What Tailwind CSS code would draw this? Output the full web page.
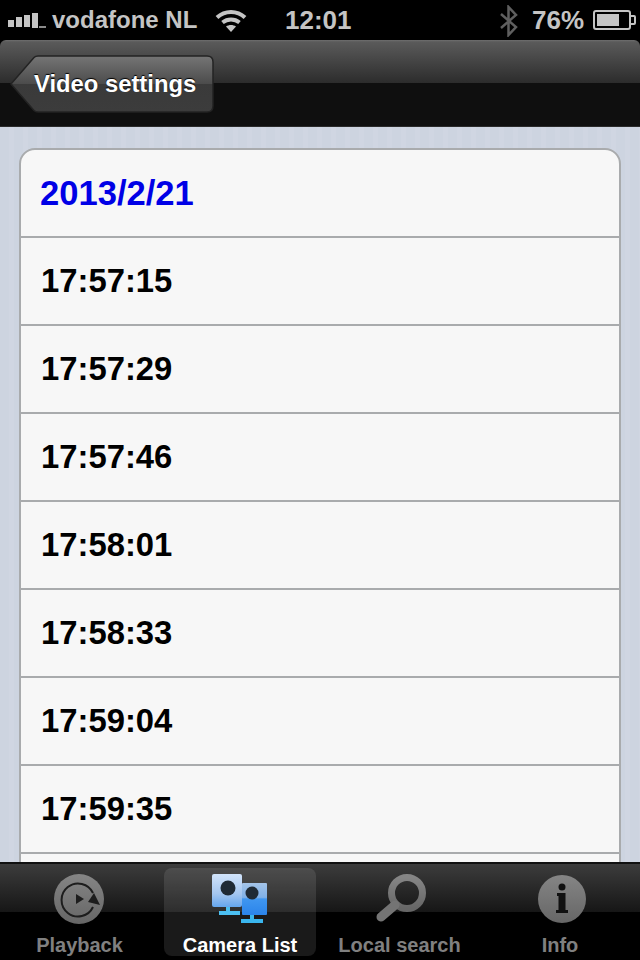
<!DOCTYPE html>
<html lang="en">
<head>
<meta charset="UTF-8">
<script src="https://cdn.jsdelivr.net/npm/@tailwindcss/browser@4"></script>
<title>Video settings</title>
</head>
<body class="bg-black">
<div class="w-[640px] h-[960px] flex flex-col overflow-hidden font-['Liberation_Sans',Arial,sans-serif]">

  <!-- status bar -->
  <div class="h-[40px] shrink-0 bg-black flex items-center text-[#c4c4c4] text-[24px] font-bold leading-none">
    <svg class="ml-[8px] mt-[2px]" width="38" height="20" viewBox="0 0 38 20" fill="#c4c4c4">
      <rect x="0" y="9" width="6" height="7"/><rect x="8" y="6" width="6" height="10"/><rect x="16" y="4" width="6" height="12"/><rect x="24" y="2" width="6" height="15"/><rect x="31" y="15" width="7" height="2" opacity=".7"/>
    </svg>
    <span class="ml-[6px] w-[163px]">vodafone NL</span>
    <svg class="mt-[-1px]" width="32" height="24" viewBox="0 0 32 24" fill="none" stroke="#c4c4c4" stroke-width="4">
      <path d="M2 9.500C10 2 22 2 30 9.500"/><path d="M7.500 14.500C12.500 10.500 19.500 10.500 24.500 14.500"/><path d="M16 24L11 18.500C14 16.500 18 16.500 21 18.500Z" fill="#c4c4c4" stroke="none"/>
    </svg>
    <span class="ml-[38px] w-[67px] text-[26px]">12:01</span>
    <svg class="ml-[147px] mt-[1px]" width="20" height="32" viewBox="0 0 20 32" fill="none" stroke="#5f5f5f" stroke-width="2.500">
      <path d="M2 9L17 22L9.500 30V2L17 10L2 23"/>
    </svg>
    <span class="ml-[13px] w-[61px] text-[26px]">76%</span>
    <svg width="44" height="22" viewBox="0 0 44 22">
      <rect x="1" y="2" width="36" height="18" rx="2" fill="none" stroke="#c4c4c4" stroke-width="2"/>
      <rect x="4" y="5" width="22" height="12" fill="#c4c4c4"/>
      <path d="M38 7h3a1 1 0 0 1 1 1v6a1 1 0 0 1-1 1h-3" fill="none" stroke="#c4c4c4" stroke-width="2"/>
    </svg>
  </div>

  <!-- nav bar -->
  <div class="h-[87px] shrink-0 rounded-t-[6px] border-b border-b-[#2a2a2a] bg-[linear-gradient(#6f6f6f_0,#5a5a5a_2px,#2c2c2c_43px,#0f0f0f_43px,#0f0f0f_100%)] pl-[10px] pt-[15px]">
    <div class="relative w-[204px] h-[58px] flex items-center pl-[24px]">
      <svg class="absolute inset-0" width="204" height="58" viewBox="0 0 204 58">
        <defs>
          <linearGradient id="backFill" x1="0" y1="0" x2="0" y2="1">
            <stop offset="0" stop-color="#757575"/>
            <stop offset=".5" stop-color="#4b4b4b"/>
            <stop offset=".5" stop-color="#3a3a3a"/>
            <stop offset="1" stop-color="#3c3c3c"/>
          </linearGradient>
        </defs>
        <path d="M1 29L24 2.500Q25.500 1 28 1H197Q203 1 203 7V51Q203 57 197 57H28Q25.500 57 24 55.500Z" fill="url(#backFill)" stroke="#232323" stroke-width="1.500"/>
      </svg>
      <span class="relative text-white font-bold text-[23.8px] leading-none [text-shadow:0_-1px_1px_#000]">Video settings</span>
    </div>
  </div>

  <!-- list -->
  <div class="flex-1 min-h-0 overflow-hidden px-[19px] pt-[21px] bg-[repeating-linear-gradient(90deg,#cdd4e0_0,#cdd4e0_9px,#d0d6e2_9px,#d0d6e2_14px)]">
    <div class="rounded-t-[16px] border-2 border-[#a9abad] bg-[#f7f7f7]">
      <div class="h-[86px] flex items-center pl-[19px] font-bold text-[#0000e6] text-[34.6px] leading-none">2013/2/21</div>
      <div class="h-[88px] flex items-center pl-[20px] border-t-2 border-[#a9abad] font-bold text-black text-[32.8px] leading-none">17:57:15</div>
      <div class="h-[88px] flex items-center pl-[20px] border-t-2 border-[#a9abad] font-bold text-black text-[32.8px] leading-none">17:57:29</div>
      <div class="h-[88px] flex items-center pl-[20px] border-t-2 border-[#a9abad] font-bold text-black text-[32.8px] leading-none">17:57:46</div>
      <div class="h-[88px] flex items-center pl-[20px] border-t-2 border-[#a9abad] font-bold text-black text-[32.8px] leading-none">17:58:01</div>
      <div class="h-[88px] flex items-center pl-[20px] border-t-2 border-[#a9abad] font-bold text-black text-[32.8px] leading-none">17:58:33</div>
      <div class="h-[88px] flex items-center pl-[20px] border-t-2 border-[#a9abad] font-bold text-black text-[32.8px] leading-none">17:59:04</div>
      <div class="h-[88px] flex items-center pl-[20px] border-t-2 border-[#a9abad] font-bold text-black text-[32.8px] leading-none">17:59:35</div>
      <div class="h-[88px] border-t-2 border-[#a9abad]"></div>
    </div>
  </div>

  <!-- tab bar -->
  <div class="h-[98px] shrink-0 border-t-2 border-t-[#111] bg-[linear-gradient(#3c3c3c_0,#161616_48px,#000_48px,#000_100%)] grid grid-cols-4 pt-[4px] pb-[4px] font-bold text-[20px] leading-none text-[#808080]">
    <div class="flex flex-col items-center">
      <div class="h-[62px] flex items-center">
        <svg class="mr-[2px]" width="52" height="52" viewBox="0 0 52 52">
          <defs>
            <linearGradient id="iconFill" x1="0" y1="0" x2="0" y2="1"><stop offset="0" stop-color="#858585"/><stop offset="1" stop-color="#666"/></linearGradient>
          </defs>
          <circle cx="26" cy="26" r="25" fill="url(#iconFill)"/>
          <path d="M40 20A16.500 16.500 0 1 0 40 34" fill="none" stroke="#1d1d1d" stroke-width="2"/>
          <path d="M23 21L31 26L23 31Z" fill="#1d1d1d"/>
          <path d="M35 29L41 20L47 32Z" fill="#1d1d1d"/>
        </svg>
      </div>
      <span class="mt-[5px] mr-[1px]">Playback</span>
    </div>
    <div class="flex flex-col items-center rounded-[8px] bg-white/10 mx-[4px] text-white">
      <div class="h-[62px] flex items-center">
        <svg class="mr-[1px]" width="56" height="50" viewBox="0 0 56 50">
          <defs>
            <linearGradient id="camA" x1="0" y1="0" x2="0" y2="1"><stop offset="0" stop-color="#d2e4fb"/><stop offset=".6" stop-color="#a4c6f0"/><stop offset="1" stop-color="#64a6ee"/></linearGradient>
            <linearGradient id="camB" x1="0" y1="0" x2="0" y2="1"><stop offset="0" stop-color="#a4c4e8"/><stop offset=".45" stop-color="#7fb0e8"/><stop offset=".5" stop-color="#3f96f0"/><stop offset="1" stop-color="#2b84ea"/></linearGradient>
          </defs>
          <rect x="0" y="0" width="30" height="33" rx="2" fill="url(#camA)"/>
          <circle cx="16" cy="14" r="7.500" fill="#1f2a35"/>
          <path d="M14 33h4v4h10v4H7v-4h7z" fill="#4cc0f2"/>
          <rect x="30" y="9" width="25" height="32" rx="1" fill="url(#camB)"/>
          <circle cx="40" cy="19" r="6.500" fill="#1f2a35"/>
          <path d="M38 41h4v4h9v4H29v-4h9z" fill="#3ab6ee"/>
        </svg>
      </div>
      <span class="mt-[5px]">Camera List</span>
    </div>
    <div class="flex flex-col items-center">
      <div class="h-[62px] flex items-center">
        <svg width="54" height="52" viewBox="0 0 54 52" fill="none">
          <circle cx="34" cy="20" r="15.500" stroke="url(#iconFill)" stroke-width="7"/>
          <path d="M22 32L8 44" stroke="#747474" stroke-width="9" stroke-linecap="round"/>
        </svg>
      </div>
      <span class="mt-[5px] mr-[1px]">Local search</span>
    </div>
    <div class="flex flex-col items-center">
      <div class="h-[62px] flex items-center">
        <svg class="ml-[3px]" width="50" height="50" viewBox="0 0 50 50">
          <circle cx="25" cy="25" r="24" fill="url(#iconFill)"/>
          <circle cx="25" cy="13" r="3.500" fill="#111"/>
          <path d="M20 19h8.500v17H31v3H19v-3h2.500V22H20z" fill="#111"/>
        </svg>
      </div>
      <span class="mt-[5px]">Info</span>
    </div>
  </div>

</div>
</body>
</html>
